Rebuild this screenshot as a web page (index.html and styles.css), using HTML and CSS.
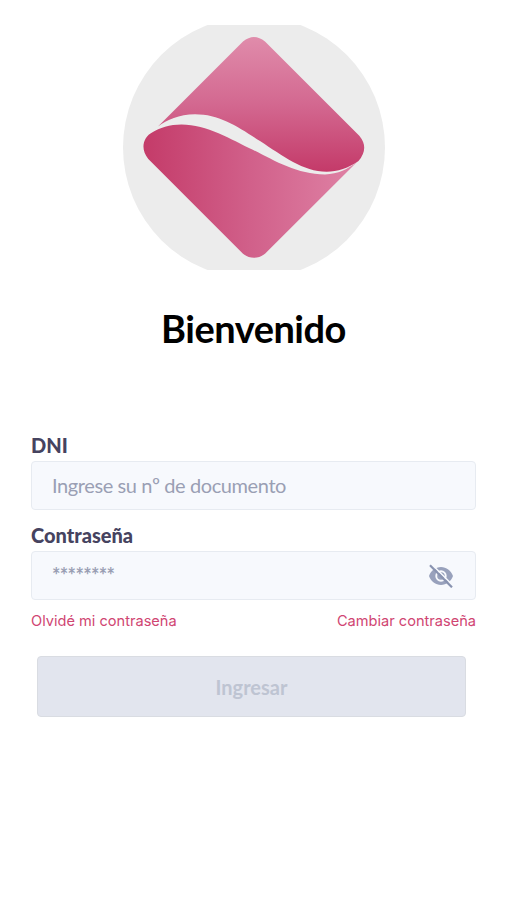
FILE: index.html
```
<!DOCTYPE html>
<html lang="es">
    <head>
        <meta charset="utf-8">
        <meta name="viewport" content="width=device-width, initial-scale=1">
        <title>Bienvenido</title>
        <link rel="stylesheet" href="styles.css">
    </head>
    <body>
        <main class="login">
            <svg class="logo" viewBox="0 0 262 245" aria-hidden="true">
                <defs>
                    <linearGradient id="logo-top" x1="0" y1="0" x2="0" y2="1">
                        <stop offset="0" stop-color="#e08cab"/>
                        <stop offset="0.5" stop-color="#d36890"/>
                        <stop offset="1" stop-color="#c43a69"/>
                    </linearGradient>
                    <linearGradient id="logo-bottom" x1="0" y1="0" x2="1" y2="0">
                        <stop offset="0" stop-color="#c43b69"/>
                        <stop offset="0.5" stop-color="#d1608a"/>
                        <stop offset="1" stop-color="#df82a5"/>
                    </linearGradient>
                </defs>
                <circle cx="131" cy="122.5" r="131" fill="#ececec"/>
                <path fill="url(#logo-top)" d="M35 101.500L120 16.500Q131 7.500 142 16.500L236.300 110.700Q246.500 123 235.500 136C226 143 214 146.700 203.700 146.700C180 146.700 160 131 137 116C115 102 97 89.300 72 89.300C56 89.300 44 95 35 101.500Z"/>
                <path fill="url(#logo-bottom)" d="M25.300 134C17 124 20 112 29.500 107.200C36 103 47 99.500 58.500 99.500C84 99.500 108 114.500 130.300 125C152 136 174 149.400 202 149.400C215 149.200 225 144 234 137L142 228.700Q131 237 120 228.700Z"/>
            </svg>
            <h1 class="title">Bienvenido</h1>
            <form class="form">
                <label class="label" for="dni">DNI</label>
                <div class="field">
                    <input class="input" id="dni" type="text" placeholder="Ingrese su nº de documento">
                </div>
                <label class="label" for="password">Contraseña</label>
                <div class="field">
                    <input class="input input-password" id="password" type="password" placeholder="********">
                    <svg class="eye" viewBox="0 0 26 24" aria-hidden="true">
                        <path fill="#98a1bc" fill-rule="evenodd" d="M1 12C3 6.500 7.600 3 13 3S23 6.500 25 12C23 17.500 18.400 21 13 21S3 17.500 1 12ZM13 6.300A5.700 5.700 0 1 0 13 17.700A5.700 5.700 0 1 0 13 6.300Z"/>
                        <circle cx="13" cy="12" r="3.800" fill="#98a1bc"/>
                        <path stroke="#f7f9fd" stroke-width="1.600" d="M4.200 0.700L25 21.500"/>
                        <path stroke="#8993b0" stroke-width="2.200" d="M2 1.300L24 23.300"/>
                    </svg>
                </div>
                <div class="links">
                    <a class="link" href="#">Olvidé mi contraseña</a>
                    <a class="link" href="#">Cambiar contraseña</a>
                </div>
                <button class="submit" type="submit" disabled>Ingresar</button>
            </form>
        </main>
    </body>
</html>
```

FILE: styles.css
```
* {
    box-sizing: border-box;
}

body {
    margin: 0;
    background-color: #ffffff;
    font-family: Lato, sans-serif;
}

.login {
    display: flex;
    flex-direction: column;
    align-items: center;
    padding: 25px 31px 0;
}

.logo {
    width: 262px;
    height: 245px;
}

.title {
    margin: 35px 0 0;
    font-size: 38px;
    line-height: 46px;
    font-weight: bold;
    letter-spacing: -0.5px;
    color: #000000;
}

.form {
    display: flex;
    flex-direction: column;
    width: 100%;
    margin-top: 81px;
}

.label {
    height: 29px;
    font-size: 20px;
    line-height: 26px;
    font-weight: 900;
    color: #46435f;
}

.field {
    display: flex;
    align-items: center;
    height: 49px;
    margin-bottom: 12px;
    padding: 0 21px 0 20px;
    background-color: #f7f9fd;
    border: 1px solid #e7ebf1;
    border-radius: 4px;
}

.input {
    flex: 1;
    min-width: 0;
    padding: 0 0 1px;
    border: 0;
    outline: 0;
    background: none;
    font-family: Lato, sans-serif;
    font-size: 20px;
    letter-spacing: -0.4px;
    color: #46435f;
}
.input::placeholder {
    color: #9a9fb4;
}

.input-password {
    font-weight: bold;
    letter-spacing: -0.7px;
}

.eye {
    width: 26px;
    height: 24px;
}

.links {
    display: flex;
    justify-content: space-between;
    margin-top: -1px;
}

.link {
    font-family: Inter, sans-serif;
    font-size: 14.6px;
    line-height: 20px;
    color: #d04572;
    text-decoration: none;
}

.submit {
    height: 61px;
    margin: 25px 10px 0 6px;
    border: 1px solid #d9dce2;
    border-radius: 4px;
    background-color: #e2e5ee;
    font-family: Lato, sans-serif;
    font-size: 20px;
    font-weight: bold;
    color: #bec4d2;
}
```
